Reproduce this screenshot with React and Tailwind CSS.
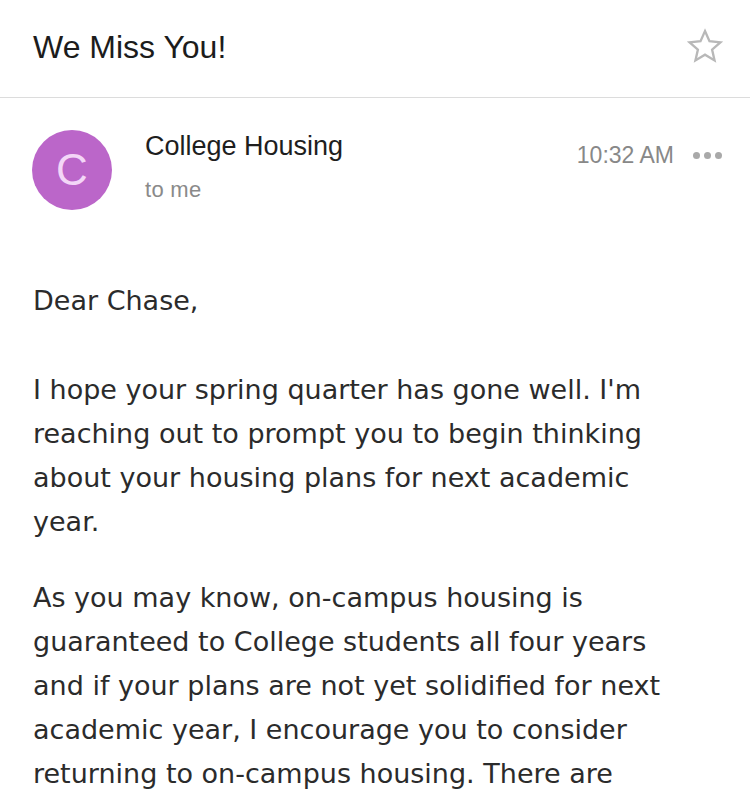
export default function App() {
  const p1 = [
    "I hope your spring quarter has gone well. I'm",
    "reaching out to prompt you to begin thinking",
    "about your housing plans for next academic",
    "year.",
  ];
  const p2 = [
    "As you may know, on-campus housing is",
    "guaranteed to College students all four years",
    "and if your plans are not yet solidified for next",
    "academic year, I encourage you to consider",
    "returning to on-campus housing. There are",
  ];
  return (
    <div className="w-[750px] h-[790px] overflow-hidden bg-white">
      <div className="h-[98px] flex items-center justify-between pl-[33px] pr-[26px] border-b border-[#dcdcdc]">
        <div className="text-[32px] text-[#1c1c1c] pb-[3px]" style={{ fontFamily: '"Liberation Sans", Arial, sans-serif' }}>We Miss You!</div>
        <svg width="38" height="37" viewBox="0 0 24 24" fill="none" stroke="#b8b8b8" strokeWidth="1.5" strokeLinejoin="miter" className="mb-[4px]">
          <polygon points="12,2 14.9,8.6 22,9.3 16.6,14 18.2,21 12,17.3 5.8,21 7.4,14 2,9.3 9.1,8.6" />
        </svg>
      </div>
      <div className="flex pt-[32px] pl-[32px] pr-[28px]" style={{ fontFamily: '"Liberation Sans", Arial, sans-serif' }}>
        <div className="w-[80px] h-[80px] rounded-full bg-[#bb66c9] flex items-center justify-center text-[#f3d6f7] text-[44px] shrink-0">C</div>
        <div className="ml-[33px] flex-1 pt-[3px]">
          <div className="text-[27px] text-[#1e1e1e] leading-[26px]">College Housing</div>
          <div className="text-[22px] text-[#8a8a8a] mt-[20px] leading-[22px] tracking-[0.3px]">to me</div>
        </div>
        <div className="flex items-center h-[26px] mt-[12px]">
          <div className="text-[23px] text-[#888]">10:32 AM</div>
          <div className="flex gap-[4px] ml-[19px]">
            <div className="w-[7px] h-[7px] rounded-full bg-[#a9a9a9]" />
            <div className="w-[7px] h-[7px] rounded-full bg-[#a9a9a9]" />
            <div className="w-[7px] h-[7px] rounded-full bg-[#a9a9a9]" />
          </div>
        </div>
      </div>
      <div className="pl-[33px] pt-[69px] text-[#2b2b2b] text-[27px] leading-[44px] whitespace-nowrap" style={{ fontFamily: '"DejaVu Sans", Verdana, sans-serif' }}>
        <div>Dear Chase,</div>
        <div className="mt-[45px]">
          {p1.map((l) => (
            <div key={l}>{l}</div>
          ))}
        </div>
        <div className="mt-[32px]">
          {p2.map((l) => (
            <div key={l}>{l}</div>
          ))}
        </div>
      </div>
    </div>
  );
}
